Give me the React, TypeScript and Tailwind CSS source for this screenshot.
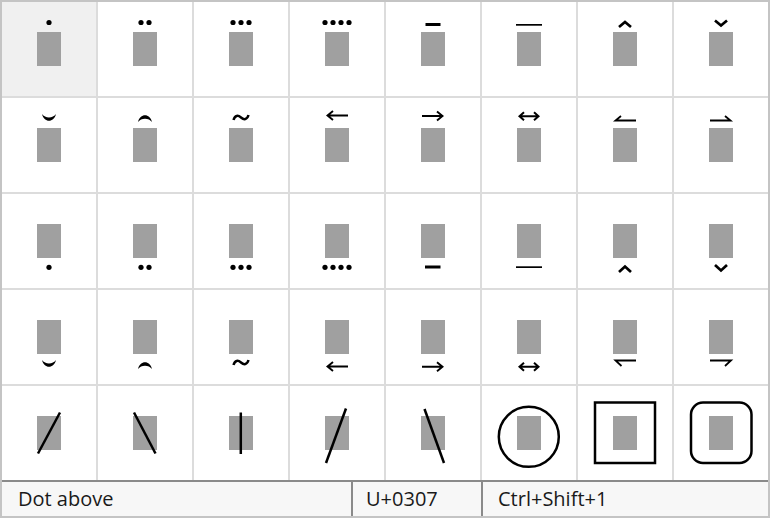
import React from 'react';

// Each mark is drawn in a 94x94 cell; the grey base glyph sits at (35,30) 24x34.
const dots = (n: number, y: number) => {
  const start = 47 - ((n - 1) * 8) / 2;
  return Array.from({ length: n }, (_, i) => <circle key={i} cx={start + i * 8} cy={y} r={2.6} fill="#000" />);
};

const S = { stroke: '#000', fill: 'none' } as const;

const arrowL = (y: number) => <path d={`M37 ${y} H58 M43 ${y - 4.5} L37.5 ${y} L43 ${y + 4.5}`} {...S} strokeWidth={1.9} />;
const arrowR = (y: number) => <path d={`M36 ${y} H57 M51 ${y - 4.5} L56.5 ${y} L51 ${y + 4.5}`} {...S} strokeWidth={1.9} />;
const arrowLR = (y: number) => (
  <path d={`M37.5 ${y} H56.5 M42 ${y - 4} L37.5 ${y} L42 ${y + 4} M52 ${y - 4} L56.5 ${y} L52 ${y + 4}`} {...S} strokeWidth={2} />
);
const breve = (y: number) => <path d={`M40 ${y} C42 ${y + 9} 52 ${y + 9} 54 ${y} C51 ${y + 4.5} 43 ${y + 4.5} 40 ${y} Z`} fill="#000" />;
const invBreve = (y: number) => <path d={`M40 ${y} C42 ${y - 9} 52 ${y - 9} 54 ${y} C51 ${y - 4.5} 43 ${y - 4.5} 40 ${y} Z`} fill="#000" />;
const tilde = (y: number) => (
  <path d={`M39.5 ${y + 6} C41 ${y + 1} 44 ${y + 1} 47 ${y + 3.5} C50 ${y + 6} 53 ${y + 6} 54.5 ${y + 1}`} {...S} strokeWidth={2.5} />
);

const marks: React.ReactNode[] = [
  // row 1 — above
  dots(1, 20.5),
  dots(2, 20.5),
  dots(3, 20.5),
  dots(4, 20.5),
  <rect x={39.5} y={21} width={15} height={3} fill="#000" />,
  <rect x={34} y={22} width={26} height={1.7} fill="#000" />,
  <path d="M41 25 L47 20 L53 25" {...S} strokeWidth={2.7} />,
  <path d="M41 18.5 L47 23.5 L53 18.5" {...S} strokeWidth={2.7} />,
  // row 2 — above
  breve(16),
  invBreve(24),
  tilde(16),
  arrowL(17.5),
  arrowR(18),
  arrowLR(18.3),
  <path d="M43 18 L37.5 22.5 H58" {...S} strokeWidth={1.8} />,
  <path d="M51 18 L56.5 22.5 H36" {...S} strokeWidth={1.8} />,
  // row 3 — below
  dots(1, 73.3),
  dots(2, 73.3),
  dots(3, 73.3),
  dots(4, 73.3),
  <rect x={39} y={71.5} width={15.5} height={3} fill="#000" />,
  <rect x={34} y={72.3} width={26} height={1.7} fill="#000" />,
  <path d="M41 78 L47 72.5 L53 78" {...S} strokeWidth={2.7} />,
  <path d="M41 71 L47 76.5 L53 71" {...S} strokeWidth={2.7} />,
  // row 4 — below
  breve(70),
  invBreve(79),
  tilde(69),
  arrowL(76.5),
  arrowR(76.8),
  arrowLR(76.8),
  <path d="M43.5 76 L37.5 70.5 H58" {...S} strokeWidth={1.8} />,
  <path d="M51 76 L57 70.5 H36" {...S} strokeWidth={1.8} />,
  // row 5 — overlays and enclosures
  <path d="M36 67.5 L58 26.5" {...S} strokeWidth={2.5} />,
  <path d="M36 26.5 L57.5 67.5" {...S} strokeWidth={2.5} />,
  <path d="M46.8 26.5 V68" {...S} strokeWidth={2.5} />,
  <path d="M36 77 L56 22.5" {...S} strokeWidth={2.5} />,
  <path d="M38.5 23 L58 77" {...S} strokeWidth={2.5} />,
  <circle cx={46.8} cy={50.8} r={30} {...S} strokeWidth={2.5} />,
  <rect x={17} y={16.5} width={60} height={60.5} {...S} strokeWidth={2.5} />,
  <rect x={17} y={16.5} width={60.5} height={60.5} rx={12} {...S} strokeWidth={2.5} />,
];

function Cell({ mark, selected }: { mark: React.ReactNode; selected: boolean }) {
  return (
    <div className={selected ? 'bg-[#f0f0f0]' : 'bg-white'}>
      <svg width={94} height={94} viewBox="0 0 94 94" className="block">
        <rect x={35} y={30} width={24} height={34} fill="#a0a0a0" />
        {mark}
      </svg>
    </div>
  );
}

export default function App() {
  return (
    <div
      className="w-[770px] h-[518px] border-2 border-[#c4c4c4] flex flex-col bg-white text-[#1a1a1a]"
      style={{ fontFamily: '"Open Sans", "Noto Sans", sans-serif' }}
    >
      <div className="grid grid-cols-[repeat(8,94px)] grid-rows-[repeat(5,94px)] gap-[2px] bg-[#dcdcdc]">
        {marks.map((m, i) => (
          <Cell key={i} mark={m} selected={i === 0} />
        ))}
      </div>
      <div className="flex-1 flex border-t-2 border-[#8a8a8a] bg-[#f7f7f7] text-[20px] leading-none">
        <div className="w-[351px] flex items-center pl-4 border-r-2 border-[#8a8a8a]">Dot above</div>
        <div className="w-[130px] flex items-center pl-[13px] border-r-2 border-[#8a8a8a]">U+0307</div>
        <div className="flex-1 flex items-center pl-[15px]">Ctrl+Shift+1</div>
      </div>
    </div>
  );
}
